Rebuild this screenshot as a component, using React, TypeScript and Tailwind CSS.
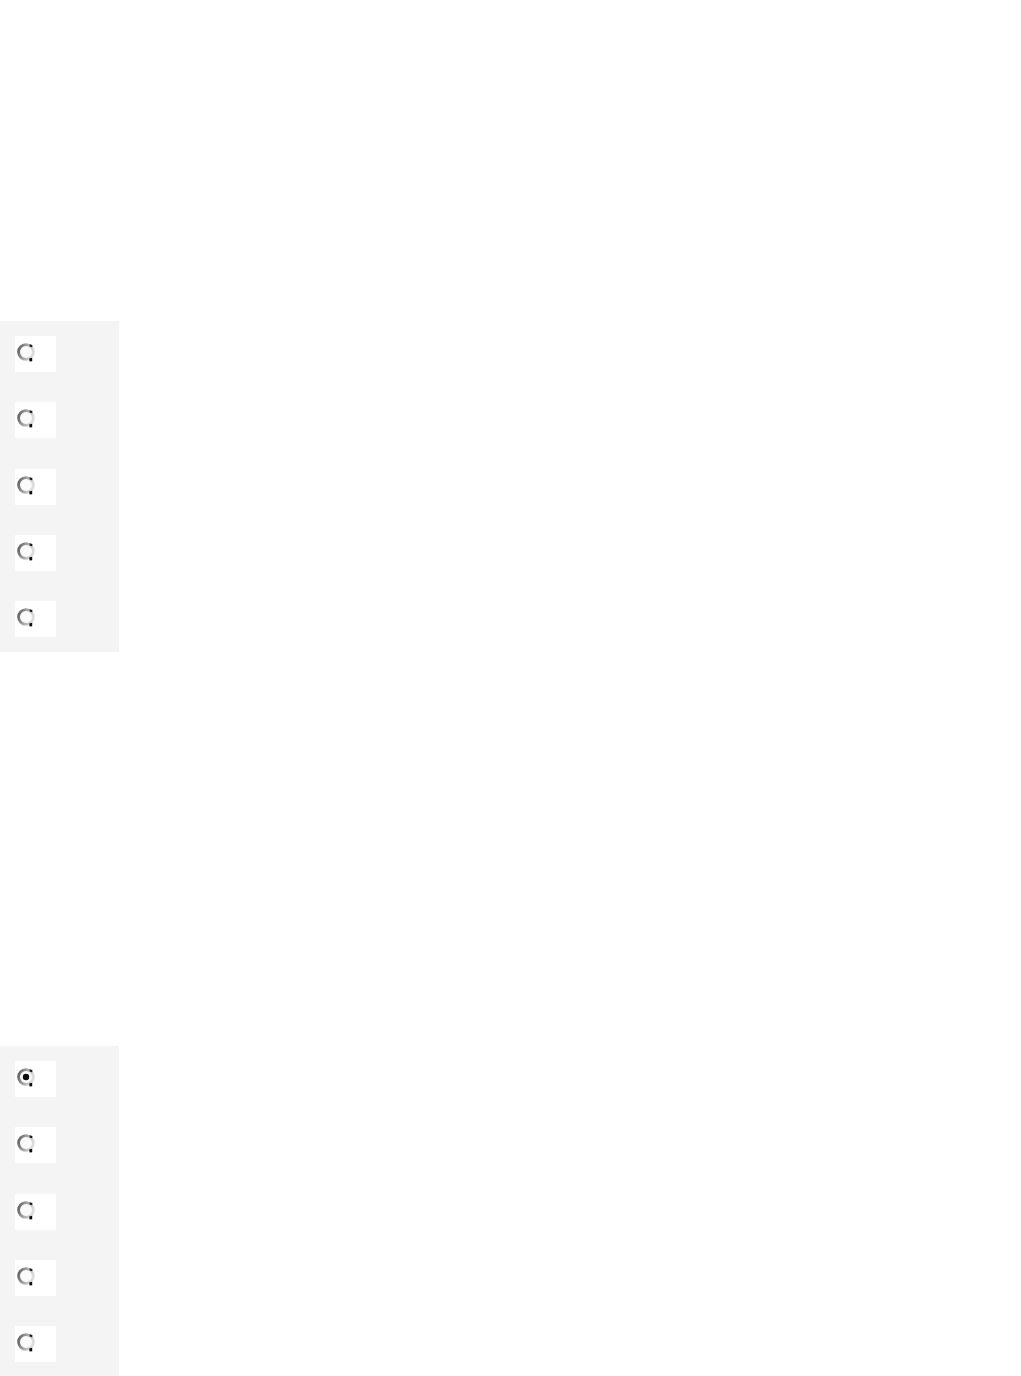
import React from "react";

function Radio({ checked }: { checked?: boolean }) {
  return (
    <svg width="20" height="20" viewBox="0 0 20 20" className="block">
      <defs>
        <linearGradient id="ring" x1="0" y1="0" x2="1" y2="0.3">
          <stop offset="0" stopColor="#5a5a5a" />
          <stop offset="0.45" stopColor="#9a9a9a" />
          <stop offset="1" stopColor="#dcdcdc" />
        </linearGradient>
      </defs>
      <circle cx="10" cy="10" r="7.4" fill="#fafafa" stroke="url(#ring)" strokeWidth="2.8" />
      <path d="M13.6 2.2 L16.4 3 L16.2 5.2 L13.6 4.6 Z" fill="#1a1a1a" />
      <path d="M13.2 16.6 L16.2 15.8 L16.2 19.2 L13.6 19.4 Z" fill="#0d0d0d" />
      {checked && <circle cx="10" cy="10" r="3.2" fill="#0d0d0d" />}
    </svg>
  );
}

function Panel({ first }: { first?: boolean }) {
  return (
    <div className="w-[119px] h-[331px] bg-[#f4f4f4] pt-[15px] pl-[15px] flex flex-col gap-[30px]">
      {[0, 1, 2, 3, 4].map((i) => (
        <div key={i} className={i === 2 ? "w-[41px] h-[36px] bg-white pl-px pt-[6px] mt-px" : "w-[41px] h-[36px] bg-white pl-px pt-[6px]"}>
          <Radio checked={first && i === 0} />
        </div>
      ))}
    </div>
  );
}

export default function App() {
  return (
    <div className="w-[1021px] h-[1376px] bg-white overflow-hidden" style={{ fontFamily: "'Liberation Sans', sans-serif" }}>
      <div className="h-[321px]" />
      <Panel />
      <div className="h-[394px]" />
      <Panel first />
    </div>
  );
}
